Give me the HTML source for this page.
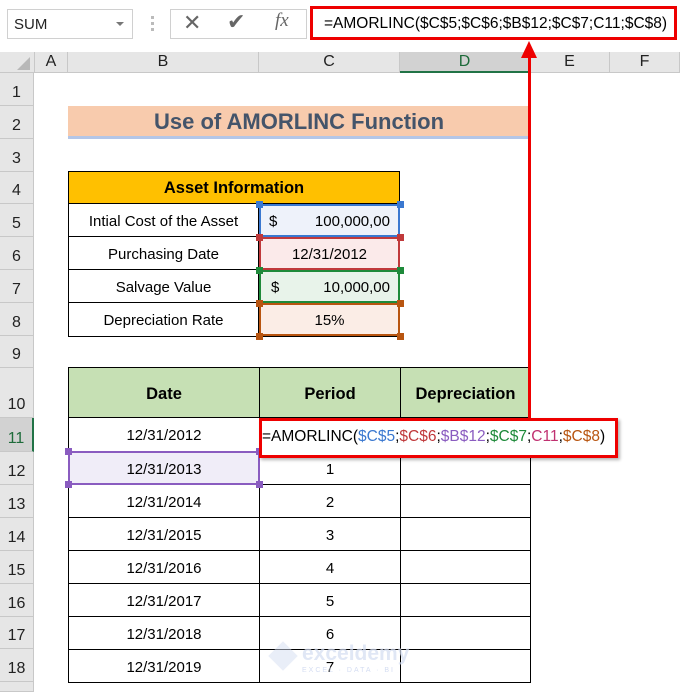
<!DOCTYPE html>
<html><head><meta charset="utf-8"><style>
*{box-sizing:border-box;margin:0;padding:0}
body{width:680px;height:690px;background:#fff;position:relative;overflow:hidden;font-family:"Liberation Sans",sans-serif}
.a{position:absolute}
.c{position:absolute;display:flex;align-items:center;justify-content:center;font-size:15px;color:#000;padding-top:2px}
.rh{position:absolute;left:0;width:34px;background:#e6e6e6;border-bottom:1px solid #c8c8c8;border-right:1px solid #c8c8c8;display:flex;align-items:flex-end;justify-content:center;padding-bottom:3px;font-size:16px;color:#222}
.ch{position:absolute;top:52px;height:21px;background:#e6e6e6;border-right:1px solid #c8c8c8;border-bottom:1px solid #c8c8c8;display:flex;align-items:center;justify-content:center;font-size:16px;color:#222}
.hd{position:absolute;width:7px;height:7px}
</style></head><body>
<div class="a" style="left:0;top:0;width:680px;height:52px;background:#fff"></div>
<div class="a" style="left:7px;top:9px;width:126px;height:30px;border:1px solid #d0d0d0;font-size:15px;color:#222;padding:6px 0 0 6px">SUM</div>
<div class="a" style="left:116px;top:22px;width:0;height:0;border-left:4px solid transparent;border-right:4px solid transparent;border-top:4px solid #777"></div>
<div class="a" style="left:151px;top:16px;width:3px;height:3px;background:#bbb;box-shadow:0 6px #bbb,0 12px #bbb"></div>
<div class="a" style="left:170px;top:9px;width:137px;height:30px;border:1px solid #d0d0d0"></div>
<div class="a" style="left:183px;top:10px;font-size:22px;color:#666">✕</div>
<div class="a" style="left:227px;top:9px;font-size:22px;color:#666">✔</div>
<div class="a" style="left:275px;top:10px;font-size:19px;color:#666;font-family:'Liberation Serif',serif;font-style:italic">fx</div>
<div class="a" style="left:310px;top:6px;width:367px;height:34px;border:3px solid #ee0000;background:#fff;font-size:15.5px;color:#000;padding:6px 0 0 11px;white-space:nowrap">=AMORLINC($C$5;$C$6;$B$12;$C$7;C11;$C$8)</div>
<div class="a" style="left:0;top:52px;width:35px;height:21px;background:#e6e6e6;border-right:1px solid #c8c8c8;border-bottom:1px solid #c8c8c8"></div>
<div class="a" style="left:17px;top:57px;width:0;height:0;border-left:13px solid transparent;border-bottom:13px solid #b8b8b8"></div>
<div class="ch" style="left:35px;width:33px">A</div>
<div class="ch" style="left:68px;width:191px">B</div>
<div class="ch" style="left:259px;width:141px">C</div>
<div class="ch" style="left:400px;width:130px;background:#d2d2d2;color:#1e6b3a;border-bottom:2px solid #217346">D</div>
<div class="ch" style="left:530px;width:80px">E</div>
<div class="ch" style="left:610px;width:70px">F</div>
<div class="rh" style="top:73px;height:33px">1</div>
<div class="rh" style="top:106px;height:33px">2</div>
<div class="rh" style="top:139px;height:33px">3</div>
<div class="rh" style="top:172px;height:32px">4</div>
<div class="rh" style="top:204px;height:33px">5</div>
<div class="rh" style="top:237px;height:33px">6</div>
<div class="rh" style="top:270px;height:33px">7</div>
<div class="rh" style="top:303px;height:33px">8</div>
<div class="rh" style="top:336px;height:32px">9</div>
<div class="rh" style="top:368px;height:50px">10</div>
<div class="rh" style="top:418px;height:34px;background:#d2d2d2;color:#1e6b3a;border-right:2px solid #217346">11</div>
<div class="rh" style="top:452px;height:33px">12</div>
<div class="rh" style="top:485px;height:33px">13</div>
<div class="rh" style="top:518px;height:33px">14</div>
<div class="rh" style="top:551px;height:33px">15</div>
<div class="rh" style="top:584px;height:33px">16</div>
<div class="rh" style="top:617px;height:32px">17</div>
<div class="rh" style="top:649px;height:33px">18</div>
<div class="rh" style="top:682px;height:10px"></div>
<div class="c" style="left:68px;top:106px;width:462px;height:33px;background:#f8cbad;border-bottom:3px solid #b4c6e7;font-size:22px;font-weight:bold;color:#44546a">Use of AMORLINC Function</div>
<div class="a" style="left:68px;top:171px;width:332px;height:166px;border:1px solid #000"></div>
<div class="c" style="left:69px;top:172px;width:330px;height:32px;background:#ffc000;font-weight:bold;font-size:16.5px;border-bottom:1px solid #000">Asset Information</div>
<div class="c" style="left:69px;top:204px;width:190px;height:33px;border-bottom:1px solid #000;border-right:1px solid #000">Intial Cost of the Asset</div>
<div class="c" style="left:69px;top:237px;width:190px;height:33px;border-bottom:1px solid #000;border-right:1px solid #000">Purchasing Date</div>
<div class="c" style="left:69px;top:270px;width:190px;height:33px;border-bottom:1px solid #000;border-right:1px solid #000">Salvage Value</div>
<div class="c" style="left:69px;top:303px;width:190px;height:33px;border-right:1px solid #000">Depreciation Rate</div>
<div class="c" style="left:259px;top:204px;width:141px;height:33px;background:#eef2fa;border:2px solid #3a78d0;justify-content:space-between;padding:2px 8px 0">$<span>100,000,00</span></div>
<div class="c" style="left:259px;top:237px;width:141px;height:33px;background:#fbeaea;border:2px solid #c0393b">12/31/2012</div>
<div class="c" style="left:259px;top:270px;width:141px;height:33px;background:#e8f3ea;border:2px solid #1e8a3a;justify-content:space-between;padding:2px 8px 0 10px">$<span>10,000,00</span></div>
<div class="c" style="left:259px;top:303px;width:141px;height:33px;background:#fbede6;border:2px solid #b85510">15%</div>
<div class="hd" style="left:256px;top:201px;background:#3a78d0"></div><div class="hd" style="left:397px;top:201px;background:#3a78d0"></div>
<div class="hd" style="left:256px;top:234px;background:#c0393b"></div><div class="hd" style="left:397px;top:234px;background:#c0393b"></div>
<div class="hd" style="left:256px;top:267px;background:#1e8a3a"></div><div class="hd" style="left:397px;top:267px;background:#1e8a3a"></div>
<div class="hd" style="left:256px;top:300px;background:#b85510"></div><div class="hd" style="left:397px;top:300px;background:#b85510"></div>
<div class="hd" style="left:256px;top:333px;background:#b85510"></div><div class="hd" style="left:397px;top:333px;background:#b85510"></div>
<div class="a" style="left:68px;top:367px;width:463px;height:316px;border:1px solid #000"></div>
<div class="a" style="left:69px;top:368px;width:461px;height:50px;background:#c6e0b4;border-bottom:1px solid #000"></div>
<div class="a" style="left:259px;top:368px;width:1px;height:314px;background:#000"></div>
<div class="a" style="left:400px;top:368px;width:1px;height:314px;background:#000"></div>
<div class="c" style="left:69px;top:368px;width:190px;height:50px;font-weight:bold;font-size:16.5px">Date</div>
<div class="c" style="left:260px;top:368px;width:140px;height:50px;font-weight:bold;font-size:16.5px">Period</div>
<div class="c" style="left:401px;top:368px;width:129px;height:50px;font-weight:bold;font-size:16.5px">Depreciation</div>
<div class="a" style="left:69px;top:451px;width:461px;height:1px;background:#000"></div>
<div class="a" style="left:69px;top:484px;width:461px;height:1px;background:#000"></div>
<div class="a" style="left:69px;top:517px;width:461px;height:1px;background:#000"></div>
<div class="a" style="left:69px;top:550px;width:461px;height:1px;background:#000"></div>
<div class="a" style="left:69px;top:583px;width:461px;height:1px;background:#000"></div>
<div class="a" style="left:69px;top:616px;width:461px;height:1px;background:#000"></div>
<div class="a" style="left:69px;top:649px;width:461px;height:1px;background:#000"></div>
<div class="c" style="left:69px;top:418px;width:190px;height:33px">12/31/2012</div>
<div class="c" style="left:68px;top:451px;width:192px;height:34px;background:#f0edf8;border:2px solid #8a5cc0">12/31/2013</div>
<div class="hd" style="left:65px;top:448px;background:#8a5cc0"></div><div class="hd" style="left:256px;top:448px;background:#8a5cc0"></div>
<div class="hd" style="left:65px;top:481px;background:#8a5cc0"></div><div class="hd" style="left:256px;top:481px;background:#8a5cc0"></div>
<div class="c" style="left:69px;top:485px;width:190px;height:33px">12/31/2014</div>
<div class="c" style="left:69px;top:518px;width:190px;height:33px">12/31/2015</div>
<div class="c" style="left:69px;top:551px;width:190px;height:33px">12/31/2016</div>
<div class="c" style="left:69px;top:584px;width:190px;height:33px">12/31/2017</div>
<div class="c" style="left:69px;top:617px;width:190px;height:33px">12/31/2018</div>
<div class="c" style="left:69px;top:650px;width:190px;height:33px">12/31/2019</div>
<div class="c" style="left:260px;top:452px;width:140px;height:33px">1</div>
<div class="c" style="left:260px;top:485px;width:140px;height:33px">2</div>
<div class="c" style="left:260px;top:518px;width:140px;height:33px">3</div>
<div class="c" style="left:260px;top:551px;width:140px;height:33px">4</div>
<div class="c" style="left:260px;top:584px;width:140px;height:33px">5</div>
<div class="c" style="left:260px;top:617px;width:140px;height:33px">6</div>
<div class="c" style="left:260px;top:650px;width:140px;height:33px">7</div>
<div class="a" style="left:259px;top:418px;width:359px;height:40px;border:3px solid #ee0000;background:#fff;font-size:15.5px;padding:7px 0 0 0;white-space:nowrap;box-shadow:2px 2px 3px rgba(0,0,0,.3)">=AMORLINC(<span style="color:#3a78d0">$C$5</span>;<span style="color:#c0393b">$C$6</span>;<span style="color:#8a5cc0">$B$12</span>;<span style="color:#1e8a3a">$C$7</span>;<span style="color:#c03070">C11</span>;<span style="color:#b85510">$C$8</span>)</div>
<div class="a" style="left:528px;top:56px;width:3px;height:363px;background:#ee0000"></div>
<div class="a" style="left:521px;top:41px;width:0;height:0;border-left:8px solid transparent;border-right:8px solid transparent;border-bottom:17px solid #ee0000"></div>
<div class="a" style="left:270px;top:643px;width:26px;height:26px;background:#d4ddf2;opacity:.5;transform:rotate(45deg) scale(.8)"></div>
<div class="a" style="left:302px;top:642px;font-size:21px;font-weight:bold;color:#d4ddf2;opacity:.7">exceldemy</div>
<div class="a" style="left:302px;top:667px;font-size:7px;letter-spacing:2px;color:#d4ddf2">EXCEL · DATA · BI</div>
</body></html>
